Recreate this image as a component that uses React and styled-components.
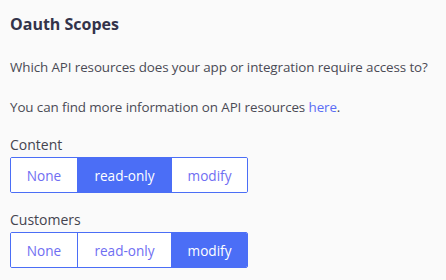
import React from 'react'
import styled, { createGlobalStyle } from 'styled-components'

const GlobalStyle = createGlobalStyle`
  html, body {
    margin: 0;
    padding: 0;
    background: #fafafa;
  }
  body {
    font-family: 'Open Sans', 'Liberation Sans', sans-serif;
  }
`

const Panel = styled.section`
  width: 446px;
  height: 280px;
  box-sizing: border-box;
  padding: 12px 10px 0 10px;
  background: #fafafa;
  color: #4a4a55;
`

const Title = styled.h2`
  margin: 0;
  font-size: 16px;
  line-height: 24px;
  font-weight: 700;
  color: #33334a;
`

const Text = styled.p`
  margin: ${props => props.$top}px 0 0 0;
  font-size: 13.4px;
  line-height: 20px;
  letter-spacing: -0.1px;
`

const Link = styled.a`
  color: #5a6cf5;
  text-decoration: none;
`

const Group = styled.div`
  margin-top: ${props => props.$top}px;
`

const Label = styled.div`
  font-size: 14px;
  font-weight: 400;
  line-height: 18px;
  color: #44444f;
`

const Segmented = styled.div`
  display: flex;
  width: 238px;
  height: 36px;
  margin-top: 3px;
  box-sizing: border-box;
  border: 1px solid #4b6ef6;
  border-radius: 2px;
  overflow: hidden;
  background: #fff;
`

const Option = styled.button`
  box-sizing: border-box;
  width: ${props => props.$w}px;
  flex: none;
  border: none;
  border-left: ${props => (props.$first ? 'none' : '1px solid #4b6ef6')};
  padding: 0;
  margin: 0;
  font-family: inherit;
  font-size: 13.6px;
  background: ${props => (props.$active ? '#4b6ef6' : '#fff')};
  color: ${props => (props.$active ? '#fff' : '#6f6ef2')};
  cursor: pointer;
`

const options = [
  { label: 'None', w: 66 },
  { label: 'read-only', w: 94 },
  { label: 'modify', w: 76 },
]

const Scope = ({ name, value, top }) => (
  <Group $top={top}>
    <Label>{name}</Label>
    <Segmented>
      {options.map((o, i) => (
        <Option key={o.label} $w={o.w} $first={i === 0} $active={o.label === value}>
          {o.label}
        </Option>
      ))}
    </Segmented>
  </Group>
)

const App = () => {
  return (
    <Panel>
      <GlobalStyle />
      <Title>Oauth Scopes</Title>
      <Text $top={21}>Which API resources does your app or integration require access to?</Text>
      <Text $top={20}>
        You can find more information on API resources <Link href="#">here</Link>.
      </Text>
      <Scope name="Content" value="read-only" top={19} />
      <Scope name="Customers" value="modify" top={18} />
    </Panel>
  )
}

export default App
